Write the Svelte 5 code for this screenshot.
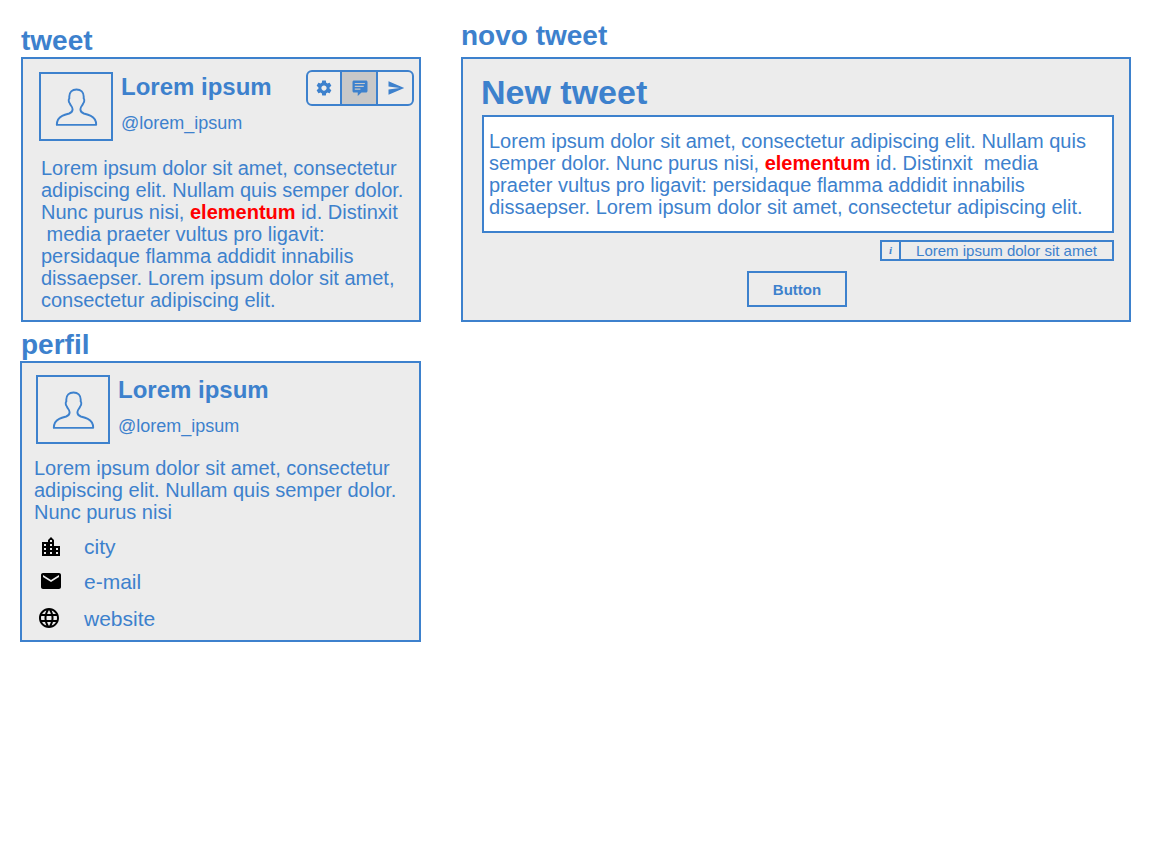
<script>
  const bio = 'Lorem ipsum dolor sit amet, consectetur adipiscing elit. Nullam quis semper dolor. Nunc purus nisi';
</script>

{#snippet person()}
  <header class="person">
    <div class="avatar">
      <svg width="42" height="38" viewBox="0.3 0 42 38" fill="none" stroke="currentColor" stroke-width="1.9" stroke-linejoin="round">
        <path d="M21.8 1.500C17.400 1.500 14.600 4.200 14.600 8.500V10.600C13.600 11.400 13.900 14 15.200 15.500C15.600 17.500 17.900 18.500 17.900 21.200C17.900 24 17 24.600 14.500 25.500C12 26.200 9.500 26.900 7.500 27.800C3.800 29.600 2.100 32.500 2.100 36.900H15L41.500 36.700C41.500 32.500 39.800 29.600 36.100 27.800C34.100 26.900 31.600 26.200 29.100 25.500C26.600 24.600 25.700 24 25.700 21.200C25.700 18.500 28 17.500 28.400 15.500C29.700 14 30 11.400 29 10.600V8.500C29 4.200 26.200 1.500 21.800 1.500Z" />
      </svg>
    </div>
    <div class="names">
      <h2>Lorem ipsum</h2>
      <p class="handle">@lorem_ipsum</p>
    </div>
  </header>
{/snippet}

<main>
  <div class="column left">
    <section class="tweet">
      <h1>tweet</h1>
      <article class="card">
        <div class="top">
          {@render person()}
          <div class="actions">
            <button aria-label="Settings">
              <svg viewBox="0 0 24 24" width="18" height="18"><path d="M19.43 12.98c.04-.32.07-.64.07-.98s-.03-.66-.07-.98l2.11-1.65c.19-.15.24-.42.12-.64l-2-3.46c-.12-.22-.39-.3-.61-.22l-2.49 1c-.52-.4-1.08-.73-1.69-.98l-.38-2.65C14.46 2.18 14.25 2 14 2h-4c-.25 0-.46.18-.49.42l-.38 2.65c-.61.25-1.17.59-1.69.98l-2.49-1c-.23-.09-.49 0-.61.22l-2 3.46c-.13.22-.07.49.12.64l2.11 1.65c-.04.32-.07.65-.07.98s.03.66.07.98l-2.11 1.65c-.19.15-.24.42-.12.64l2 3.46c.12.22.39.3.61.22l2.49-1c.52.4 1.08.73 1.69.98l.38 2.65c.03.24.24.42.49.42h4c.25 0 .46-.18.49-.42l.38-2.65c.61-.25 1.17-.59 1.69-.98l2.49 1c.23.09.49 0 .61-.22l2-3.46c.12-.22.07-.49-.12-.64l-2.11-1.65zM12 15.5c-1.93 0-3.5-1.57-3.5-3.5s1.57-3.5 3.5-3.5 3.5 1.57 3.5 3.5-1.57 3.5-3.5 3.5z" /></svg>
            </button>
            <button class="active" aria-label="Comment">
              <svg class="bubble" viewBox="0 0 24 24" width="18" height="18"><path d="M4 2h16c1.100 0 2 .9 2 2v12c0 1.100-.9 2-2 2h-6l-5 4.500V18H4c-1.100 0-2-.9-2-2V4c0-1.100.9-2 2-2zM5 5.200v1.500h13.500V5.200zM5 9v1.500h12V9zM5 12.800v1.500h7.500v-1.500z" /></svg>
            </button>
            <button aria-label="Send">
              <svg class="plane" viewBox="0 0 24 24" width="18" height="18"><path d="M2.010 21L23 12 2.010 3 2 10l15 2-15 2z" /></svg>
            </button>
          </div>
        </div>
        <p class="text">Lorem ipsum dolor sit amet, consectetur adipiscing elit. Nullam quis semper dolor. Nunc purus nisi, <b>elementum</b> id. Distinxit <br />&nbsp;media praeter vultus pro ligavit: persidaque flamma addidit innabilis dissaepser. Lorem ipsum dolor sit amet, consectetur adipiscing elit.</p>
      </article>
    </section>

    <section class="profile">
      <h1>perfil</h1>
      <article class="card">
        {@render person()}
        <p class="text">{bio}</p>
        <ul>
          <li class="city">
            <svg viewBox="0 0 24 24" width="24" height="24"><path d="M15 11V5l-3-3-3 3v2H3v14h18V11h-6zm-8 8H5v-2h2v2zm0-4H5v-2h2v2zm0-4H5V9h2v2zm6 8h-2v-2h2v2zm0-4h-2v-2h2v2zm0-4h-2V9h2v2zm0-4h-2V5h2v2zm6 12h-2v-2h2v2zm0-4h-2v-2h2v2z" /></svg>
            <span>city</span>
          </li>
          <li class="mail">
            <svg viewBox="0 0 24 24" width="24" height="24"><path d="M20 4H4c-1.100 0-1.990.9-1.990 2L2 18c0 1.100.9 2 2 2h16c1.100 0 2-.9 2-2V6c0-1.100-.9-2-2-2zm0 4l-8 5-8-5V6l8 5 8-5v2z" /></svg>
            <span>e-mail</span>
          </li>
          <li class="site">
            <svg viewBox="0 0 24 24" width="24" height="24"><path d="M11.990 2C6.470 2 2 6.480 2 12s4.470 10 9.990 10C17.520 22 22 17.520 22 12S17.520 2 11.990 2zm6.930 6h-2.950c-.32-1.250-.78-2.450-1.380-3.560 1.840.63 3.370 1.910 4.330 3.560zM12 4.040c.83 1.200 1.480 2.530 1.910 3.960h-3.820c.43-1.430 1.080-2.760 1.910-3.960zM4.260 14C4.100 13.360 4 12.690 4 12s.1-1.360.26-2h3.380c-.08.66-.14 1.320-.14 2 0 .68.060 1.340.14 2H4.260zm.82 2h2.950c.32 1.250.78 2.450 1.380 3.560-1.840-.63-3.370-1.900-4.330-3.560zm2.950-8H5.080c.96-1.660 2.490-2.930 4.330-3.560C8.810 5.550 8.350 6.750 8.030 8zM12 19.960c-.83-1.200-1.480-2.530-1.910-3.960h3.820c-.43 1.430-1.080 2.760-1.910 3.960zM14.340 14H9.660c-.09-.66-.16-1.320-.16-2 0-.68.070-1.350.16-2h4.680c.09.65.16 1.320.16 2 0 .68-.070 1.340-.16 2zm.25 5.560c.6-1.110 1.060-2.310 1.380-3.560h2.950c-.96 1.650-2.490 2.930-4.330 3.560zM16.360 14c.08-.66.14-1.320.14-2 0-.68-.060-1.340-.14-2h3.380c.16.64.26 1.310.26 2s-.1 1.360-.26 2h-3.380z" /></svg>
            <span>website</span>
          </li>
        </ul>
      </article>
    </section>
  </div>

  <section class="compose">
    <h1>novo tweet</h1>
    <article class="card">
      <h2>New tweet</h2>
      <div class="editor">Lorem ipsum dolor sit amet, consectetur adipiscing elit. Nullam quis semper dolor. Nunc purus nisi, <b>elementum</b> id. Distinxit &nbsp;media<br />praeter vultus pro ligavit: persidaque flamma addidit innabilis dissaepser. Lorem ipsum dolor sit amet, consectetur adipiscing elit.</div>
      <div class="hint"><i>i</i><span>Lorem ipsum dolor sit amet</span></div>
      <button class="submit">Button</button>
    </article>
  </section>
</main>

<style>
  :global(body) {
    margin: 0;
    background: #fff;
  }
  main {
    box-sizing: border-box;
    display: flex;
    gap: 40px;
    align-items: flex-start;
    width: 1151px;
    height: 841px;
    padding: 24px 20px 0;
    color: #3d81cd;
    font-family: "Liberation Sans", Arial, sans-serif;
  }
  main * {
    box-sizing: border-box;
  }
  h1, h2, p, ul {
    margin: 0;
    padding: 0;
  }
  h1 {
    font-size: 28px;
    line-height: 33px;
    height: 33px;
  }
  h2 {
    font-size: 24px;
    line-height: 28px;
  }
  .card {
    border: 2px solid #3d81cd;
    background: #ececec;
  }
  .left {
    width: 401px;
  }
  .tweet {
    padding-left: 1px;
  }
  .tweet .card {
    height: 265px;
    padding: 13px 5px 0 16px;
  }
  .top {
    display: flex;
    justify-content: space-between;
    align-items: flex-start;
  }
  .person {
    display: flex;
    gap: 8px;
  }
  .avatar {
    display: flex;
    justify-content: center;
    align-items: center;
    width: 74px;
    height: 69px;
    border: 2px solid #3d81cd;
  }
  .avatar svg {
    overflow: visible;
  }
  .names {
    padding-top: 1px;
  }
  .handle {
    margin-top: 12px;
    font-size: 18px;
    line-height: 20px;
  }
  .actions {
    display: flex;
    width: 108px;
    height: 36px;
    margin-top: -2px;
    border: 2px solid #3d81cd;
    border-radius: 6px;
    overflow: hidden;
  }
  .actions button {
    display: flex;
    flex: 0 0 36px;
    justify-content: center;
    align-items: center;
    padding: 0;
    border: 0;
    border-left: 2px solid #3d81cd;
    background: none;
    color: inherit;
  }
  .actions button:first-child {
    flex-basis: 32px;
    border: 0;
  }
  .actions button.active {
    background: #c8c8c8;
  }
  .actions svg, li svg {
    fill: currentColor;
  }
  .actions svg.bubble {
    margin-left: 1px;
  }
  .actions svg.plane {
    margin-left: 2px;
  }
  .text {
    font-size: 20px;
    line-height: 22px;
  }
  .tweet .text {
    width: 370px;
    margin: 16px 0 0 2px;
  }
  b {
    color: #f00;
  }
  .profile h1 {
    margin-top: 6px;
    padding-left: 1px;
  }
  .profile .card {
    height: 281px;
    padding: 12px 14px 0;
  }
  .profile .text {
    width: 370px;
    margin: 13px 0 0 -2px;
  }
  ul {
    margin-top: 12px;
    list-style: none;
    font-size: 21px;
    line-height: 24px;
  }
  li {
    display: flex;
    align-items: center;
    height: 24px;
  }
  li svg {
    color: #000;
    margin-left: 3px;
    margin-right: 21px;
  }
  .mail {
    margin-top: 11px;
  }
  .mail svg {
    margin-bottom: 2px;
  }
  .site {
    margin-top: 13px;
  }
  .site svg {
    margin-left: 1px;
    margin-right: 23px;
    margin-bottom: 2px;
  }
  .compose {
    width: 670px;
  }
  .compose h1 {
    margin-top: -5px;
    height: 38px;
  }
  .compose .card {
    display: flex;
    flex-direction: column;
    height: 265px;
    padding: 13px 15px 0 19px;
  }
  .compose h2 {
    margin-left: -1px;
    font-size: 34px;
    line-height: 40px;
    height: 43px;
  }
  .editor {
    height: 118px;
    padding: 13px 5px 0;
    border: 2px solid #3d81cd;
    background: #fff;
    font-size: 20px;
    line-height: 22px;
  }
  .hint {
    display: flex;
    align-self: flex-end;
    width: 234px;
    height: 21px;
    margin-top: 7px;
    border: 2px solid #3d81cd;
    font-size: 15px;
    line-height: 17px;
  }
  .hint i {
    width: 19px;
    border-right: 2px solid #3d81cd;
    text-align: center;
    font-family: "Liberation Serif", serif;
    font-size: 11px;
    font-weight: bold;
  }
  .hint span {
    flex: 1;
    text-align: center;
  }
  .submit {
    width: 100px;
    height: 36px;
    margin: 10px 0 0 265px;
    padding: 0;
    border: 2px solid #3d81cd;
    background: none;
    color: inherit;
    font: bold 15px "Liberation Sans", Arial, sans-serif;
  }
</style>
